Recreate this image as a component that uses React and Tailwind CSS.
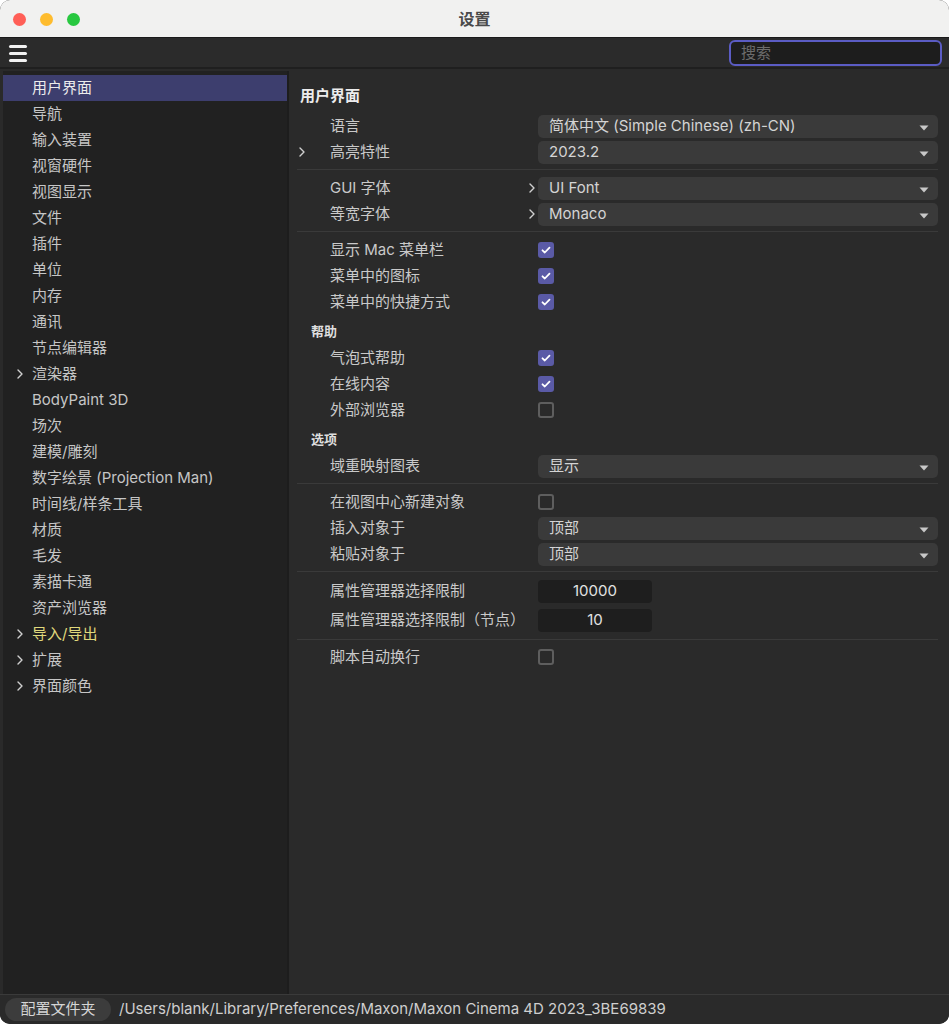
import React from 'react';

const FONT = { fontFamily: 'Inter, "Noto Sans CJK SC", sans-serif' };

const sideItems = [
    { label: '用户界面', active: true },
    { label: '导航' },
    { label: '输入装置' },
    { label: '视窗硬件' },
    { label: '视图显示' },
    { label: '文件' },
    { label: '插件' },
    { label: '单位' },
    { label: '内存' },
    { label: '通讯' },
    { label: '节点编辑器' },
    { label: '渲染器', chevron: true },
    { label: 'BodyPaint 3D' },
    { label: '场次' },
    { label: '建模/雕刻' },
    { label: '数字绘景 (Projection Man)' },
    { label: '时间线/样条工具' },
    { label: '材质' },
    { label: '毛发' },
    { label: '素描卡通' },
    { label: '资产浏览器' },
    { label: '导入/导出', chevron: true, yellow: true },
    { label: '扩展', chevron: true },
    { label: '界面颜色', chevron: true },
];

const Chevron = ({ className = '' }) => (
    <svg width="8" height="12" viewBox="0 0 8 12" className={className}>
        <path d="M2 2l4 4-4 4" fill="none" stroke="#cfcfcf" strokeWidth="1.4" strokeLinecap="round" strokeLinejoin="round" />
    </svg>
);

const Dropdown = ({ value }) => (
    <div className="flex h-[23px] flex-1 items-center justify-between rounded-[5px] bg-[#3a3a3a] pl-[11px] pr-[9px] text-[15px] text-[#d4d4d4]">
        <span>{value}</span>
        <svg width="10" height="6" viewBox="0 0 10 6" className="mt-[3px]">
            <path d="M0.5 0.5h9L5 5.5z" fill="#c8c8c8" />
        </svg>
    </div>
);

const Check = ({ on }) => (
    on ? (
        <div className="flex h-[16px] w-[16px] items-center justify-center rounded-[3px] bg-[#5a5aa6]">
            <svg width="12" height="12" viewBox="0 0 12 12">
                <path d="M2.5 6.3l2.3 2.2L9.5 3.6" fill="none" stroke="#ffffff" strokeWidth="1.8" strokeLinecap="round" strokeLinejoin="round" />
            </svg>
        </div>
    ) : (
        <div className="h-[16px] w-[16px] rounded-[3px] border-2 border-[#5e5e5e]"></div>
    )
);

const NumField = ({ value }) => (
    <div className="flex h-[23px] w-[114px] items-center justify-center rounded-[4px] bg-[#1e1e1e] text-[15px] text-[#e2e2e2]">
        {value}
    </div>
);

const Row = ({ label, left, right, tall, children }) => (
    <div className={`flex items-center ${tall ? 'h-[29px]' : 'h-[26px]'}`}>
        <div className="relative flex h-full w-[241px] shrink-0 items-center pl-[33px] text-[15px] text-[#c9c9c9]">
            {left && <Chevron className="absolute left-[1px] top-[7px]" />}
            {label}
            {right && <Chevron className="absolute right-[2px] top-[7px]" />}
        </div>
        {children}
    </div>
);

const Sep = () => <div className="mb-[5px] mt-[4px] h-px bg-[#3a3a3a]"></div>;

const Header = ({ children }) => (
    <div className="flex h-[30px] items-center pl-[14px] pt-[4px] text-[13px] font-semibold text-[#dedede]">{children}</div>
);

export default function App() {
    return (
        <div className="h-[1024px] w-[949px] bg-white" style={FONT}>
            <div className="flex h-full flex-col overflow-hidden rounded-[10px] bg-[#2a2a2a]">
                {/* title bar */}
                <div className="relative flex h-[38px] shrink-0 items-center justify-center border-b border-[#1a1a1a] bg-[#f1f1f0]">
                    <div className="absolute left-[13px] top-[13px] flex gap-[14px]">
                        <span className="h-[13px] w-[13px] rounded-full bg-[#ff5f57]"></span>
                        <span className="h-[13px] w-[13px] rounded-full bg-[#febc2e]"></span>
                        <span className="h-[13px] w-[13px] rounded-full bg-[#28c840]"></span>
                    </div>
                    <span className="text-[16px] font-semibold text-[#4a4a4a]">设置</span>
                </div>

                {/* toolbar */}
                <div className="flex h-[31px] shrink-0 items-center justify-between border-b-2 border-[#1f1f1f] bg-[#2b2b2b] pl-[9px] pr-[7px] pt-[1px]">
                    <div className="flex w-[18px] flex-col gap-[4px]">
                        <span className="h-[3px] rounded-sm bg-[#f2f2f2]"></span>
                        <span className="h-[3px] rounded-sm bg-[#f2f2f2]"></span>
                        <span className="h-[3px] rounded-sm bg-[#f2f2f2]"></span>
                    </div>
                    <div className="flex h-[26px] w-[213px] items-center rounded-[6px] border-2 border-[#5b5cc4] bg-[#1d1d1d] pl-[10px] text-[15px] text-[#6c6c6c]">
                        搜索
                    </div>
                </div>

                {/* main */}
                <div className="flex min-h-0 flex-1 pl-[3px] pr-[3px] pt-[2px]">
                    <div className="w-[284px] shrink-0 bg-[#212121] pt-[4px]">
                        {sideItems.map((it) => (
                            <div
                                key={it.label}
                                className={`relative flex h-[26px] items-center pl-[29px] text-[15px] ${it.active ? 'h-[25px] bg-[#3d3e6e] text-[#ececec]' : it.yellow ? 'text-[#e0d97c]' : 'text-[#c6c6c6]'}`}
                            >
                                {it.chevron && <Chevron className="absolute left-[13px] top-[7px]" />}
                                {it.label}
                            </div>
                        ))}
                    </div>
                    <div className="flex-1 border-l-2 border-[#1d1d1d] bg-[#2a2a2a] px-[8px] pt-[12px]">
                        <div className="flex h-[26px] items-center pl-[3px] text-[15px] font-semibold text-[#ececec]">用户界面</div>
                        <div className="mt-[4px]">
                            <Row label="语言"><Dropdown value="简体中文 (Simple Chinese) (zh-CN)" /></Row>
                            <Row label="高亮特性" left><Dropdown value="2023.2" /></Row>
                            <Sep />
                            <Row label="GUI 字体" right><Dropdown value="UI Font" /></Row>
                            <Row label="等宽字体" right><Dropdown value="Monaco" /></Row>
                            <Sep />
                            <Row label="显示 Mac 菜单栏"><Check on /></Row>
                            <Row label="菜单中的图标"><Check on /></Row>
                            <Row label="菜单中的快捷方式"><Check on /></Row>
                            <Header>帮助</Header>
                            <Row label="气泡式帮助"><Check on /></Row>
                            <Row label="在线内容"><Check on /></Row>
                            <Row label="外部浏览器"><Check /></Row>
                            <Header>选项</Header>
                            <Row label="域重映射图表"><Dropdown value="显示" /></Row>
                            <Sep />
                            <Row label="在视图中心新建对象"><Check /></Row>
                            <Row label="插入对象于"><Dropdown value="顶部" /></Row>
                            <Row label="粘贴对象于"><Dropdown value="顶部" /></Row>
                            <Sep />
                            <Row label="属性管理器选择限制" tall><NumField value="10000" /></Row>
                            <Row label="属性管理器选择限制（节点）" tall><NumField value="10" /></Row>
                            <div className="mb-[4px] mt-[4px] h-px bg-[#3a3a3a]"></div>
                            <Row label="脚本自动换行"><Check /></Row>
                        </div>
                    </div>
                </div>

                {/* bottom bar */}
                <div className="flex h-[30px] shrink-0 items-center gap-[8px] border-t border-[#3a3a3a] bg-[#2a2a2a] pl-[5px]">
                    <div className="flex h-[23px] w-[106px] items-center justify-center rounded-full bg-[#3c3c3c] text-[15px] text-[#d6d6d6]">
                        配置文件夹
                    </div>
                    <span className="text-[15px] text-[#cfcfcf]">/Users/blank/Library/Preferences/Maxon/Maxon Cinema 4D 2023_3BE69839</span>
                </div>
            </div>
        </div>
    );
}
